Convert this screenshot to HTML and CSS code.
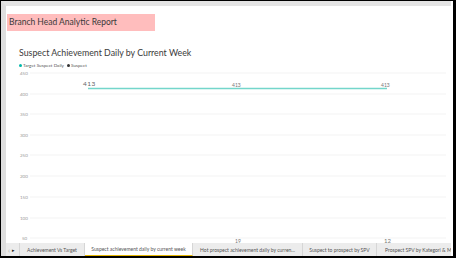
FILE: index.html
```html
<!DOCTYPE html>
<html>
<head>
    <title>Branch Head Analytic Report</title>
    <link rel="stylesheet" href="styles.css">
</head>
<body>
    <div class="frame">
        <div class="report">
            <div class="page-title">Branch Head Analytic Report</div>
            <div class="chart">
                <h2 class="chart-title">Suspect Achievement Daily by Current Week</h2>
                <div class="legend">
                    <span class="dot teal"></span><span>Target Suspect Daily</span>
                    <span class="dot dark"></span><span>Suspect</span>
                </div>
                <svg class="plot" width="445" height="175" viewBox="6 68 445 175">
                    <g class="grid">
                        <line x1="30" y1="73" x2="446" y2="73"/>
                        <line x1="30" y1="94" x2="446" y2="94"/>
                        <line x1="30" y1="114" x2="446" y2="114"/>
                        <line x1="30" y1="135" x2="446" y2="135"/>
                        <line x1="30" y1="155" x2="446" y2="155"/>
                        <line x1="30" y1="176" x2="446" y2="176"/>
                        <line x1="30" y1="197" x2="446" y2="197"/>
                        <line x1="30" y1="218" x2="446" y2="218"/>
                        <line x1="30" y1="238" x2="446" y2="238"/>
                    </g>
                    <g class="axis">
                        <text x="20" y="75">450</text>
                        <text x="20" y="96">400</text>
                        <text x="20" y="116">350</text>
                        <text x="20" y="137">300</text>
                        <text x="20" y="157">250</text>
                        <text x="20" y="178">200</text>
                        <text x="20" y="199">150</text>
                        <text x="20" y="220">100</text>
                        <text x="22" y="240">50</text>
                    </g>
                    <line class="target" x1="88" y1="88.5" x2="387" y2="88.5"/>
                    <text class="value big" x="83" y="86">413</text>
                    <text class="value" x="232" y="86.5">413</text>
                    <text class="value" x="381" y="86.5">413</text>
                    <text class="value" x="235" y="243">19</text>
                    <text class="value mid" x="384" y="242.5">12</text>
                </svg>
            </div>
            <div class="tabs">
                <div class="nav"><span class="prev">&lsaquo;</span><span class="next">&#9656;</span></div>
                <div class="tab">Achievement Vs Target</div>
                <div class="tab active">Suspect achievement daily by current week</div>
                <div class="tab">Hot prospect achievement daily by curren...</div>
                <div class="tab">Suspect to prospect by SPV</div>
                <div class="tab last">Prospect SPV by Kategori &amp; Mode</div>
            </div>
        </div>
    </div>
</body>
</html>
```
FILE: styles.css
```css
body {
    margin: 0;
    padding: 0;
    background-color: #fff;
    font-family: Lato, "Liberation Sans", sans-serif;
    color: #333;
}

.frame {
    width: 456px;
    height: 258px;
    box-sizing: border-box;
    border-top: 1px solid #000;
    border-left: 1px solid #000;
    border-right: 3px solid #000;
    border-bottom: 2px solid #000;
    overflow: hidden;
}

.report {
    height: 100%;
    box-sizing: border-box;
    border-left: 5px solid #dedede;
    border-top: 5px solid #e4e4e4;
    margin-right: 2px;
    display: flex;
    flex-direction: column;
    background-color: #fff;
}

.page-title {
    width: 146px;
    height: 17px;
    margin: 8px 0 0 1px;
    padding-left: 2px;
    background-color: #ffbdbd;
    font-size: 8.5px;
    line-height: 17px;
    color: #3a3a3a;
}

.chart {
    flex: 1;
    display: flex;
    flex-direction: column;
    overflow: hidden;
}

.chart-title {
    margin: 15px 0 0 13px;
    font-size: 8.8px;
    font-weight: normal;
    line-height: 13px;
    color: #3a3a3a;
}

.legend {
    display: flex;
    align-items: center;
    margin: 3px 0 0 13px;
    font-size: 4.6px;
    line-height: 6px;
    color: #555;
    height: 6px;
}

.dot {
    width: 3px;
    height: 3px;
    border-radius: 50%;
    margin-right: 1px;
}

.dot.teal {
    background-color: #01b8aa;
}

.dot.dark {
    background-color: #333;
    margin-left: 3px;
}

.plot {
    display: block;
    flex: none;
}

.grid line {
    stroke: #f0f0f0;
    stroke-width: 0.8;
}

.axis text {
    font-size: 4.5px;
    fill: #999;
}

.target {
    stroke: #74d6cb;
    stroke-width: 1.4;
}

.value {
    font-size: 5px;
    fill: #777;
}

.value.big {
    font-size: 6.5px;
    fill: #666;
    letter-spacing: 0.5px;
}

.value.mid {
    font-size: 6px;
}

.tabs {
    display: flex;
    flex: none;
    height: 13px;
    background-color: #ececec;
    font-size: 5px;
    line-height: 8px;
    color: #555;
    white-space: nowrap;
}

.nav {
    width: 11px;
    display: flex;
    align-items: center;
    gap: 2px;
    padding-left: 2px;
    border-right: 1px solid #d6d6d6;
}

.nav .prev {
    color: #aaa;
    font-size: 7px;
}

.nav .next {
    color: #222;
    font-size: 5px;
}

.tab {
    display: flex;
    align-items: center;
    justify-content: center;
    border-right: 1px solid #d6d6d6;
    box-sizing: border-box;
}

.tab:nth-child(2) { width: 65px; }
.tab:nth-child(3) { width: 108px; }
.tab:nth-child(4) { width: 110px; }
.tab:nth-child(5) { width: 74px; }

.tab.active {
    background-color: #fff;
    border-bottom: 1.5px solid #e8b800;
}

.tab.last {
    flex: 1;
    justify-content: flex-start;
    padding-left: 8px;
    border-right: none;
    overflow: hidden;
}
```
